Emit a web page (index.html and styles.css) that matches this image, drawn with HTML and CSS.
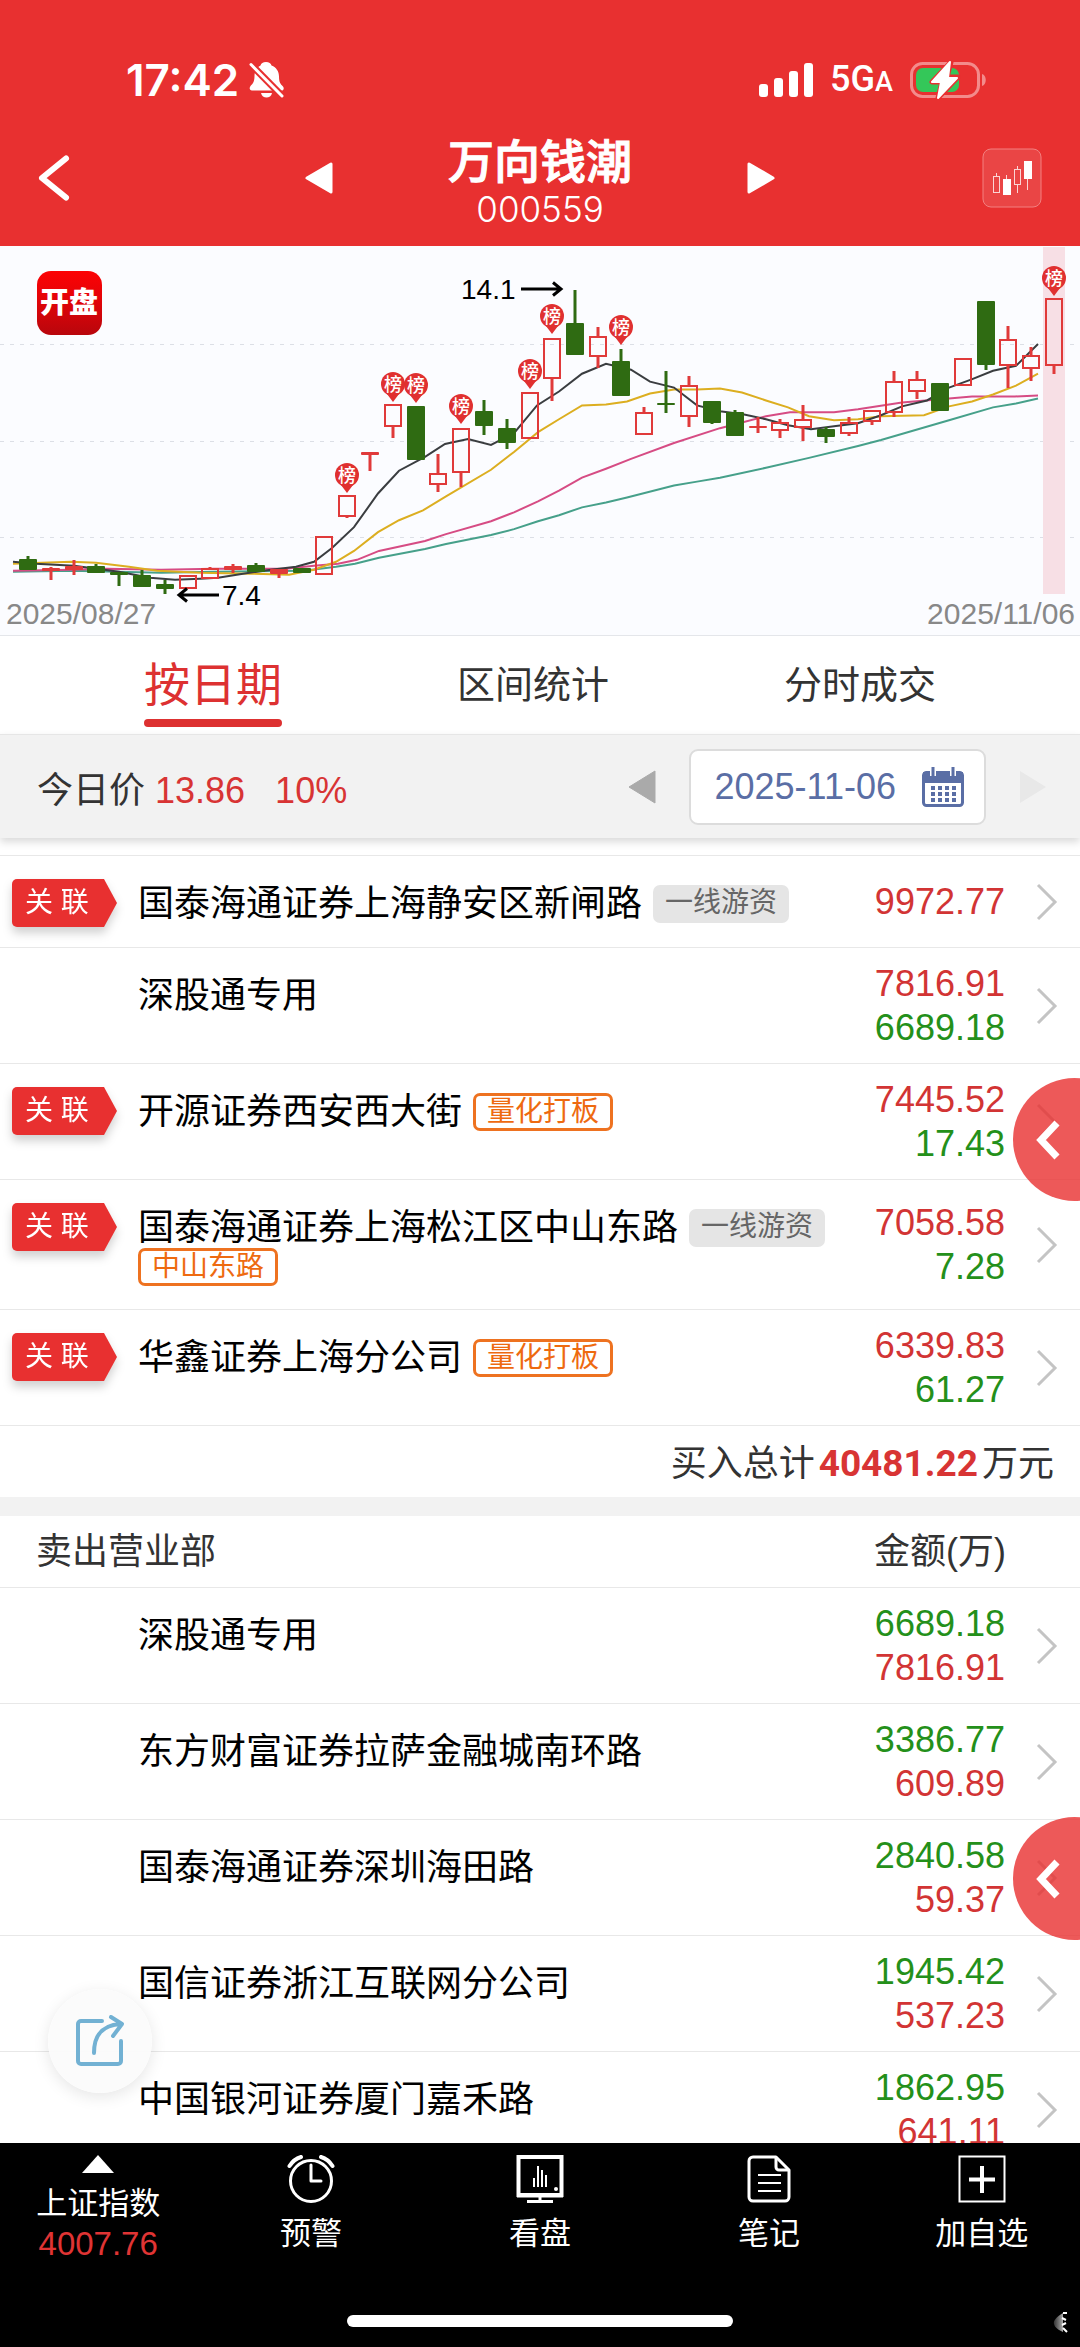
FILE: index.html
```html
<!DOCTYPE html>
<html lang="zh-CN">
<head>
<meta charset="utf-8">
<meta name="viewport" content="width=device-width, initial-scale=1">
<title>万向钱潮 000559</title>
<link rel="stylesheet" href="styles.css">
</head>
<body>
<div class="app">
  <header class="header">
    <div class="status">
      <div class="status-left">
        <span class="clock">17:42</span>
        <svg width="36" height="38" viewBox="0 0 36 38" aria-hidden="true">
          <path d="M17 1c3 0 5 1.500 5.500 3.500 5 2 7.500 6 7.500 11 0 6 1.500 7.500 4 10 1.500 2 .5 4-1.500 4H3C.5 29.500 0 27 1.500 25c2.500-2.500 4-4.500 4-10 0-5 2-8.500 6-10.500C12 2.500 14 1 17 1z" fill="#fff"/>
          <path d="M12 32h11c-1 6-10 6-11 0z" fill="#fff"/>
          <path d="M2 3.500 34 36" stroke="#e83030" stroke-width="7"/>
          <path d="M2 3.500 33 35" stroke="#fff" stroke-width="3" stroke-linecap="round"/>
        </svg>
      </div>
      <div class="status-right">
        <svg width="54" height="34" viewBox="0 0 54 34" fill="#fff" aria-hidden="true">
          <rect x="0" y="21" width="9" height="13" rx="3"/><rect x="15" y="15" width="9" height="19" rx="3"/><rect x="30" y="8" width="9" height="26" rx="3"/><rect x="45" y="0" width="9" height="34" rx="3"/>
        </svg>
        <span class="network">5G<small>A</small></span>
        <svg width="77" height="38" viewBox="0 0 77 38" aria-hidden="true">
          <rect x="1.500" y="2.500" width="67" height="33" rx="11" fill="none" stroke="#f38b8b" stroke-width="3"/>
          <path d="M72 13c5 1 5 11 0 12z" fill="#f38b8b"/>
          <rect x="6" y="7" width="43" height="24" rx="7" fill="#34c759"/>
          <path d="M41 1 22 21h10l-4 16 20-21H37z" fill="#fff" stroke="#e83030" stroke-width="5" stroke-linejoin="round"/>
          <path d="M40 1 22 21h9l-3 16 19-20h-9z" fill="#fff" stroke="#fff" stroke-width="2" stroke-linejoin="round"/>
        </svg>
      </div>
    </div>
    <div class="titlebar">
      <button class="icon-btn back" type="button" aria-label="返回">
        <svg width="32" height="46" viewBox="0 0 32 46"><path d="M28 3.500 4 23l24 19.500" fill="none" stroke="#fff" stroke-width="6" stroke-linecap="round" stroke-linejoin="round"/></svg>
      </button>
      <div class="stock">
        <button class="icon-btn" type="button" aria-label="上一只">
          <svg width="28" height="32" viewBox="0 0 28 32"><path d="M2 16 26 2v28z" fill="#fff" stroke="#fff" stroke-width="3" stroke-linejoin="round"/></svg>
        </button>
        <div class="stock-name">
          <h1>万向钱潮</h1>
          <span>000559</span>
        </div>
        <button class="icon-btn" type="button" aria-label="下一只">
          <svg width="28" height="32" viewBox="0 0 28 32"><path d="M26 16 2 2v28z" fill="#fff" stroke="#fff" stroke-width="3" stroke-linejoin="round"/></svg>
        </button>
      </div>
      <button class="icon-btn kline" type="button" aria-label="K线">
        <svg width="60" height="60" viewBox="0 0 60 60">
          <rect x="1" y="1" width="58" height="58" rx="8" fill="#fff" fill-opacity=".1" stroke="#f38080" stroke-width="1"/>
          <g fill="none" stroke="#fbd5d5" stroke-width="1"><path d="M14.500 25v3M35.500 18v3M35.500 37v8M45.500 31v11M24.500 27v4"/><rect x="11.500" y="28.500" width="6" height="16"/><rect x="32.500" y="21.500" width="6" height="15"/></g>
          <path d="M21 31h8v16h-8zM42 13h8v18h-8z" fill="#fff"/>
        </svg>
      </button>
    </div>
  </header>

  <section class="chart-wrap" aria-label="日K线">
    <svg class="chart" id="chart" viewBox="0 0 1080 389" role="img" aria-label="日K线图">
      <defs>
        <linearGradient id="logo" x1="0" y1="0" x2="0" y2="1"><stop offset="0" stop-color="#fc0204"/><stop offset=".4" stop-color="#e60408"/><stop offset="1" stop-color="#b8060c"/></linearGradient>
      </defs>
      <g stroke="#dcdfe6" stroke-width="1" stroke-dasharray="4 6"><path d="M0 98.500H1080M0 195.500H1080M0 291.500H1080"/></g>
      <rect x="1043" y="1" width="22" height="347" fill="#f7dfe5"/>
      <rect x="37" y="25" width="65" height="64" rx="14" fill="url(#logo)"/>
      <text class="logo-text" x="69" y="67" text-anchor="middle">开盘</text>
      <g id="averages"></g>
      <g id="candles"></g>
      <g fill="none" stroke="#000" stroke-width="3"><path d="M521 43h40M553 36.500l8 6.500-8 6.500M219 349h-40M187 342.500l-8 6.500 8 6.500"/></g>
      <text class="mark" x="461" y="53">14.1</text>
      <text class="mark" x="222" y="359">7.4</text>
      <text class="day" x="6" y="378">2025/08/27</text>
      <text class="day" x="1075" y="378" text-anchor="end">2025/11/06</text>
    </svg>
  </section>

  <nav class="tabs">
    <button class="tab active" type="button">按日期</button>
    <button class="tab" type="button">区间统计</button>
    <button class="tab" type="button">分时成交</button>
  </nav>

  <div class="datebar">
    <div class="price">今日价 <b>13.86</b><b class="pct">10%</b></div>
    <div class="picker">
      <button class="icon-btn" type="button" aria-label="前一天">
        <svg width="28" height="36" viewBox="0 0 28 36"><path d="M1 18 27 2v32z" fill="#aaa" stroke="#aaa" stroke-width="1" stroke-linejoin="round"/></svg>
      </button>
      <button class="date" type="button">
        <span>2025-11-06</span>
        <svg width="42" height="40" viewBox="0 0 42 40">
          <rect x="1.500" y="5.500" width="39" height="33" rx="3" fill="#fff" stroke="#5a6ea5" stroke-width="3"/>
          <path d="M1 5h40v11H1z" fill="#5a6ea5"/>
          <path d="M11 1v8M31 1v8" stroke="#fff" stroke-width="6"/>
          <path d="M11 0v9M31 0v9" stroke="#5a6ea5" stroke-width="3"/>
          <path d="M9 21h25M9 27h25M9 33h25" stroke="#5a6ea5" stroke-width="4" stroke-dasharray="4 3"/>
        </svg>
      </button>
      <button class="icon-btn" type="button" aria-label="后一天" disabled>
        <svg width="28" height="36" viewBox="0 0 28 36"><path d="M27 18 1 2v32z" fill="#e8e8e8"/></svg>
      </button>
    </div>
  </div>

  <main class="lists">
    <ul class="rows buys">
      <li class="row"><div class="lead"><span class="link-tag"><i>关 联</i></span></div><div class="seat"><span>国泰海通证券上海静安区新闸路</span><em class="tag gray">一线游资</em></div><div class="amount"><span class="up">9972.77</span></div><svg class="chev"><use href="#chev"/></svg></li>
      <li class="row"><div class="lead"></div><div class="seat"><span>深股通专用</span></div><div class="amount"><span class="up">7816.91</span><span class="down">6689.18</span></div><svg class="chev"><use href="#chev"/></svg></li>
      <li class="row"><div class="lead"><span class="link-tag"><i>关 联</i></span></div><div class="seat"><span>开源证券西安西大街</span><em class="tag orange">量化打板</em></div><div class="amount"><span class="up">7445.52</span><span class="down">17.43</span></div><svg class="chev"><use href="#chev"/></svg></li>
      <li class="row"><div class="lead"><span class="link-tag"><i>关 联</i></span></div><div class="seat"><span>国泰海通证券上海松江区中山东路</span><em class="tag gray">一线游资</em><em class="tag orange">中山东路</em></div><div class="amount"><span class="up">7058.58</span><span class="down">7.28</span></div><svg class="chev"><use href="#chev"/></svg></li>
      <li class="row"><div class="lead"><span class="link-tag"><i>关 联</i></span></div><div class="seat"><span>华鑫证券上海分公司</span><em class="tag orange">量化打板</em></div><div class="amount"><span class="up">6339.83</span><span class="down">61.27</span></div><svg class="chev"><use href="#chev"/></svg></li>
    </ul>
    <p class="total">买入总计<strong>40481.22</strong>万元</p>
    <div class="list-head"><span>卖出营业部</span><span>金额(万)</span></div>
    <ul class="rows">
      <li class="row"><div class="lead"></div><div class="seat"><span>深股通专用</span></div><div class="amount"><span class="down">6689.18</span><span class="up">7816.91</span></div><svg class="chev"><use href="#chev"/></svg></li>
      <li class="row"><div class="lead"></div><div class="seat"><span>东方财富证券拉萨金融城南环路</span></div><div class="amount"><span class="down">3386.77</span><span class="up">609.89</span></div><svg class="chev"><use href="#chev"/></svg></li>
      <li class="row"><div class="lead"></div><div class="seat"><span>国泰海通证券深圳海田路</span></div><div class="amount"><span class="down">2840.58</span><span class="up">59.37</span></div><svg class="chev"><use href="#chev"/></svg></li>
      <li class="row"><div class="lead"></div><div class="seat"><span>国信证券浙江互联网分公司</span></div><div class="amount"><span class="down">1945.42</span><span class="up">537.23</span></div><svg class="chev"><use href="#chev"/></svg></li>
      <li class="row"><div class="lead"></div><div class="seat"><span>中国银河证券厦门嘉禾路</span></div><div class="amount"><span class="down">1862.95</span><span class="up">641.11</span></div><svg class="chev"><use href="#chev"/></svg></li>
    </ul>
    <button class="drawer first" type="button" aria-label="展开买入"><svg width="26" height="40" viewBox="0 0 26 40"><path d="M22 3 6 20l16 17" fill="none" stroke="#fff" stroke-width="7"/></svg></button>
    <button class="drawer second" type="button" aria-label="展开卖出"><svg width="26" height="40" viewBox="0 0 26 40"><path d="M22 3 6 20l16 17" fill="none" stroke="#fff" stroke-width="7"/></svg></button>
    <button class="share" type="button" aria-label="分享">
      <svg width="50" height="52" viewBox="0 0 50 52" fill="none" stroke="#72b1d3" stroke-width="4" stroke-linecap="round" stroke-linejoin="round"><path d="M27 6H6a3 3 0 0 0-3 3v37a3 3 0 0 0 3 3h37a3 3 0 0 0 3-3V26"/><path d="M19 38C19 20 27 10 46 9M36 2l11 7-9 12"/></svg>
    </button>
  </main>

  <footer class="bottom">
    <nav class="toolbar">
      <a class="tool index" href="#index"><svg width="32" height="18" viewBox="0 0 32 18"><path d="M16 0 32 18H0z" fill="#fff"/></svg><span>上证指数</span><span class="points">4007.76</span></a>
      <a class="tool" href="#alert"><svg width="48" height="48" viewBox="0 0 48 48" fill="none" stroke="#fff" stroke-width="3" stroke-linecap="round"><circle cx="24" cy="26" r="20.500"/><path d="M24 10v16h10" stroke-linejoin="round"/><path d="M2.500 11C5 7 9 3.500 14 2M34 2c5 1.500 9 5 11.500 9" stroke-width="4"/></svg><span>预警</span></a>
      <a class="tool" href="#watch"><svg width="48" height="48" viewBox="0 0 48 48" fill="none" stroke="#fff"><path d="M2.500 2h43v38h-43z" stroke-width="4"/><path d="M1 40.500h46" stroke-width="4"/><path d="M24 41v5M11 46.500h26" stroke-width="3"/><path d="M18 23v9M22 11v21M26 15v17M30 20v12" stroke-width="2"/><circle cx="40" cy="34" r="2" fill="#fff" stroke="none"/></svg><span>看盘</span></a>
      <a class="tool" href="#notes"><svg width="48" height="48" viewBox="0 0 48 48" fill="none" stroke="#fff" stroke-width="3" stroke-linejoin="round"><path d="M31 2H8a4 4 0 0 0-4 4v36a4 4 0 0 0 4 4h32a4 4 0 0 0 4-4V15z"/><path d="M31 2v10a3 3 0 0 0 3 3h10"/><path d="M13 20h23M13 28h23M13 36h23" stroke-width="2"/></svg><span>笔记</span></a>
      <a class="tool" href="#add"><svg width="48" height="48" viewBox="0 0 48 48" fill="none" stroke="#fff"><path d="M1.500 1.500h45v45h-45z" stroke-width="2"/><path d="M24 11v27M11 24.500h26" stroke-width="4"/></svg><span>加自选</span></a>
    </nav>
    <div class="home-bar"></div>
    <svg class="corner" width="16" height="22" viewBox="0 0 16 22" aria-hidden="true"><defs><linearGradient id="fade"><stop offset="0" stop-color="#333"/><stop offset="1" stop-color="#aaa"/></linearGradient></defs><path d="M10 1C3 5 0 9 1 12c1 4 5 6 9 8z" fill="url(#fade)"/><path d="M10 1h4M9 6l4 2M9 13l4-2M10 16l4 4" stroke="#fff" stroke-width="2"/></svg>
  </footer>
</div>
<svg class="sprite" width="0" height="0" aria-hidden="true"><symbol id="chev" viewBox="0 0 22 38"><path d="M2 2 19 19 2 36" fill="none" stroke="#c4c4c4" stroke-width="3"/></symbol></svg>
<script src="chart.js"></script>
</body>
</html>
```
FILE: styles.css
```css
* { box-sizing: border-box; }

body {
  margin: 0;
  background: #000;
  color: #000;
  font-family: "Liberation Sans", "Noto Sans CJK SC", sans-serif;
  font-size: 36px;
}

button { padding: 0; border: 0; background: none; font: inherit; color: inherit; }
svg { display: block; flex: none; }
ul { list-style: none; margin: 0; padding: 0; }
em, i { font-style: normal; }

.app { display: flex; flex-direction: column; height: 100vh; background: #fff; }

/* header */
.header { flex: none; background: #e83030; color: #fff; }
.status { display: flex; justify-content: space-between; padding: 50px 93px 0 126px; }
.status-left, .status-right { display: flex; align-items: center; height: 60px; }
.status-left { gap: 10px; }
.status-right { gap: 17px; }
.clock { font: 600 44px/60px Inter, sans-serif; }
.network { font: 500 36px/60px Roboto, sans-serif; }
.network small { font-size: 27px; }
.titlebar {
  display: grid;
  grid-template-columns: 1fr 470px 1fr;
  align-items: center;
  min-height: 136px;
  padding: 0 38px;
}
.stock { display: flex; align-items: center; justify-content: space-between; }
.stock-name { padding-top: 5px; text-align: center; }
.stock-name h1 { margin: 0; font-size: 46px; line-height: 56px; font-weight: 500; -webkit-text-stroke: 1px #fff; }
.stock-name span { display: block; font: 300 35px/38px Inter, sans-serif; }
.kline { justify-self: end; }
.back { justify-self: start; }

/* chart */
.chart-wrap { flex: none; background: #fbfcff; border-bottom: 1px solid #e4e6ea; }
.chart { width: 100%; height: auto; }
.logo-text { font: 900 29px "Noto Sans CJK SC", sans-serif; fill: #fff; }
.mark { font-size: 28px; fill: #000; }
.day { font-size: 30px; fill: #888; }
.pin-text { font: 500 18px "Noto Sans CJK SC", sans-serif; fill: #fff; }

/* tabs */
.tabs {
  flex: none;
  display: flex;
  justify-content: space-between;
  padding: 0 144px;
  height: 98px;
}
.tab { font-size: 38px; line-height: 97px; color: #333; }
.tab.active {
  position: relative;
  font-size: 46px;
  line-height: 96px;
  color: #dd3131;
}
.tab.active::after {
  content: "";
  position: absolute;
  left: 0;
  right: 0;
  bottom: 7px;
  height: 8px;
  border-radius: 4px;
  background: #dd3131;
}

/* date bar */
.datebar {
  flex: none;
  position: relative;
  z-index: 1;
  display: flex;
  align-items: center;
  justify-content: space-between;
  height: 104px;
  padding: 0 33px 0 37px;
  background: #f2f2f2;
  border-top: 1px solid #e6e6e6;
  box-shadow: 0 4px 8px rgba(0, 0, 0, .15);
  color: #333;
}
.price b { font-weight: 400; color: #d83434; }
.price .pct { margin-left: 30px; }
.picker { display: flex; align-items: center; gap: 33px; }
.date {
  display: flex;
  align-items: center;
  gap: 26px;
  height: 76px;
  padding: 0 20px 0 24px;
  border: 2px solid #dcdcdc;
  border-radius: 9px;
  background: #fff;
  color: #5a6ea5;
}

/* brokerage lists */
.lists { flex: 1; min-height: 0; position: relative; overflow: hidden; }
.buys { margin-top: 17px; border-top: 1px solid #e8e8e8; }
.row {
  display: grid;
  grid-template-columns: 138px 1fr auto 75px;
  align-items: center;
  border-bottom: 1px solid #e8e8e8;
}
.lead { align-self: start; padding: 23px 0 0 12px; }
.link-tag { display: block; width: 105px; filter: drop-shadow(0 6px 5px rgba(0, 0, 0, .18)); }
.link-tag i {
  display: block;
  padding-left: 13px;
  font-size: 28px;
  line-height: 48px;
  color: #fff;
  background: #e83030;
  border-radius: 5px;
  clip-path: polygon(0 0, 92px 0, 100% 50%, 92px 100%, 0 100%);
}
.seat {
  align-self: start;
  display: flex;
  flex-wrap: wrap;
  align-items: center;
  gap: 0 11px;
  padding: 28px 0 23px;
  line-height: 40px;
}
.tag { height: 38px; border-radius: 7px; font-size: 28px; }
.tag.gray { padding: 0 12px; line-height: 36px; background: #e5e5e5; color: #666; }
.tag.orange { padding: 0 11px; border: 3px solid #ee7220; line-height: 32px; color: #ee6a10; }
.amount { padding: 14px 0 13px; text-align: right; line-height: 44px; }
.amount span { display: block; }
.up { color: #d23434; }
.down { color: #24901a; }
.chev { width: 22px; height: 38px; margin-left: 31px; }
.total { margin: 0; padding: 4px 26px 0; text-align: right; line-height: 67px; color: #333; }
.total strong { margin: 0 4px; font-family: Roboto, sans-serif; font-size: 37px; color: #d83434; }
.list-head {
  display: flex;
  justify-content: space-between;
  padding: 0 74px 0 36px;
  border-top: 19px solid #f2f2f2;
  border-bottom: 1px solid #e8e8e8;
  line-height: 71px;
  color: #333;
}

/* floating controls */
.drawer {
  position: absolute;
  right: -56px;
  width: 123px;
  height: 123px;
  padding-left: 22px;
  border-radius: 50%;
  background: rgba(232, 48, 48, .8);
}
.drawer.first { top: 240px; }
.drawer.second { top: 979px; }
.share {
  position: absolute;
  left: 48px;
  bottom: 50px;
  display: grid;
  place-items: center;
  width: 104px;
  height: 104px;
  border-radius: 50%;
  background: rgba(251, 251, 251, .96);
  box-shadow: 0 4px 16px rgba(0, 0, 0, .1);
}

/* bottom bar */
.bottom { flex: none; position: relative; height: 204px; background: #000; color: #fff; }
.toolbar { display: grid; grid-template-columns: 6fr 7fr 7fr 7fr 6fr; }
.tool {
  display: flex;
  flex-direction: column;
  align-items: center;
  gap: 11px;
  padding-top: 12px;
  font-size: 31px;
  line-height: 40px;
  color: #fff;
  text-decoration: none;
}
.tool.index { gap: 0; }
.tool.index svg { margin-bottom: 11px; }
.points { font-size: 33px; color: #e03434; }
.home-bar {
  position: absolute;
  left: 50%;
  bottom: 20px;
  width: 386px;
  height: 12px;
  margin-left: -193px;
  border-radius: 6px;
  background: #fff;
}
.corner { position: absolute; right: 11px; bottom: 13px; }
```
FILE: chart.js
```js
// Each candle: [type, high, bodyTop, bodyBottom, low]; g = green body, r = red body, h = hollow red.
const candles = [
  ['g',313,316,327,327],['r',324,325,328,337],['r',317,323,327,332],['g',321,323,330,330],['g',329,329,332,343],
  ['g',327,332,344,344],['g',337,341,346,352],['h',333,333,345,345],['h',324,326,335,335],['r',321,323,327,330],
  ['g',320,322,329,329],['r',326,326,331,335],['g',325,325,330,330],['h',294,294,331,331],['h',253,253,273,275],
  ['r',208,208,211,227],['h',161,161,182,194],['g',162,162,216,216],['h',210,230,240,248],['h',185,185,228,243],
  ['g',156,167,182,191],['g',175,184,199,205],['h',148,148,194,194],['h',94,94,133,157],['g',44,78,110,110],
  ['h',82,92,111,123],['g',104,116,152,152],['h',163,169,190,190],['g',126,159,161,169],['h',131,141,172,183],
  ['g',157,157,179,180],['g',166,168,192,192],['r',173,182,184,189],['h',175,179,186,194],['h',161,176,183,197],
  ['g',183,185,193,199],['h',173,179,189,192],['h',166,167,177,181],['h',126,137,168,173],['h',126,135,146,155],
  ['g',138,138,167,167],['h',114,114,140,140],['g',56,56,120,125],['h',81,95,120,143],['h',102,111,123,136],
  ['h',54,54,120,129]
];
const averages = [
  ['#46a08a', '13,329 71,328 161,330 214,329 304,328 336,324 355,321 379,315 425,306 446,301 491,292 514,286 538,278 559,272 582,264 606,259 627,254 674,242 697,238 720,234 766,224 809,214 858,202 881,196 949,176 993,163 1016,159 1038,154'],
  ['#d64c84', '13,328 71,327 107,326 161,327 214,326 286,326 314,323 338,321 357,317 379,308 425,298 446,291 491,278 514,269 538,258 559,247 582,234 606,225 631,215 674,199 720,184 766,172 790,168 834,168 858,165 902,158 949,154 972,152 1015,152 1038,151'],
  ['#dcae20', '13,321 71,319 96,320 129,324 157,328 200,330 250,331 289,332 314,327 336,319 354,308 378,289 399,277 423,267 446,253 491,226 514,208 538,188 559,175 582,161 606,160 627,157 650,149 674,145 697,145 720,144 742,148 766,156 788,163 809,172 834,176 858,175 881,172 924,171 949,162 972,157 993,150 1016,141 1038,129'],
  ['#3a3d40', '13,319 36,321 74,323 119,329 150,335 175,337 200,336 218,335 243,331 271,327 296,324 314,319 332,305 354,284 378,250 399,227 425,213 445,200 468,195 491,201 514,189 537,161 559,147 582,129 606,119 631,125 650,137 674,143 697,161 720,167 743,170 766,175 788,181 811,185 834,182 858,179 881,171 902,162 927,156 949,143 971,135 993,126 1016,121 1038,99']
];
// Days on the top list: [candle index, pin centre y]
const pins = [[14,231],[16,139],[17,140],[19,162],[22,126],[23,71],[26,82],[45,32]];

// Plot area: 46 days across, values fitted to the plot height.
const centre = i => Math.round(28 + 22.8 * i);
const level = v => Math.round(v * 0.99);

document.getElementById('averages').innerHTML = averages.map(([color, points]) => {
  const fitted = points.split(' ').map(p => {
    const [x, y] = p.split(',').map(Number);
    return `${x},${y * 0.99}`;
  }).join(' ');
  return `<polyline points="${fitted}" fill="none" stroke="${color}" stroke-width="2"/>`;
}).join('');

document.getElementById('candles').innerHTML = candles.map(([type, ...values], i) => {
  const [high, top, bottom, low] = values.map(level);
  const x = centre(i);
  const color = type === 'g' ? '#2f6b12' : '#e03a3a';
  const wick = `<path d="M${x} ${high}V${top}M${x} ${bottom}V${low}" stroke="${color}" stroke-width="3"/>`;
  const body = type === 'h'
    ? `<rect x="${x - 8}" y="${top}" width="16" height="${bottom - top}" fill="none" stroke="${color}" stroke-width="2"/>`
    : `<rect x="${x - 9}" y="${top}" width="18" height="${bottom - top}" rx="1" fill="${color}"/>`;
  return wick + body;
}).join('') + pins.map(([i, value]) => {
  const x = centre(i);
  const y = level(value);
  return `<path d="M${x} ${y + 18}l-6-8h12z" fill="#e03030"/><circle cx="${x}" cy="${y}" r="12" fill="#e03030"/>` +
    `<text class="pin-text" x="${x}" y="${y + 7}" text-anchor="middle">榜</text>`;
}).join('');
```
